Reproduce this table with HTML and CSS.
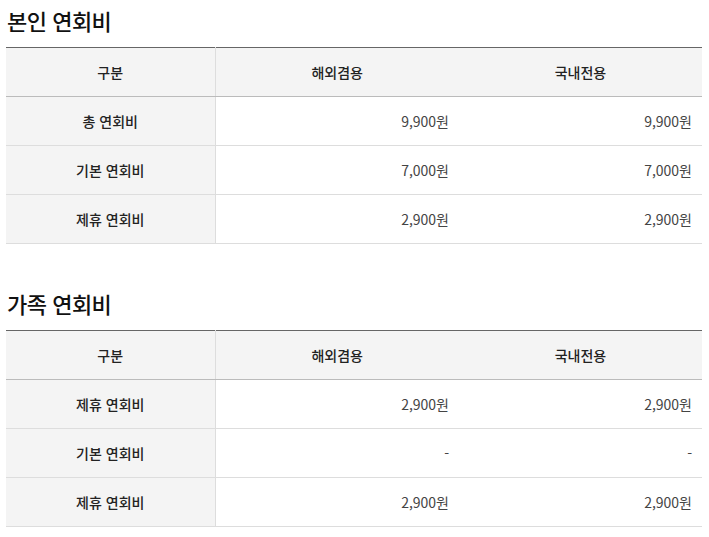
FILE: index.html
```html
<!DOCTYPE html>
<html lang="ko">
<head>
<meta charset="utf-8">
<link rel="stylesheet" href="styles.css">
</head>
<body>
<section class="fee">
  <h2 class="fee-title">본인 연회비</h2>
  <table class="fee-table">
    <colgroup><col class="c1"><col class="c2"><col class="c3"></colgroup>
    <thead>
      <tr><th>구분</th><th>해외겸용</th><th>국내전용</th></tr>
    </thead>
    <tbody>
      <tr><th>총 연회비</th><td>9,900원</td><td>9,900원</td></tr>
      <tr><th>기본 연회비</th><td>7,000원</td><td>7,000원</td></tr>
      <tr><th>제휴 연회비</th><td>2,900원</td><td>2,900원</td></tr>
    </tbody>
  </table>
</section>
<section class="fee fee-family">
  <h2 class="fee-title">가족 연회비</h2>
  <table class="fee-table">
    <colgroup><col class="c1"><col class="c2"><col class="c3"></colgroup>
    <thead>
      <tr><th>구분</th><th>해외겸용</th><th>국내전용</th></tr>
    </thead>
    <tbody>
      <tr><th>제휴 연회비</th><td>2,900원</td><td>2,900원</td></tr>
      <tr><th>기본 연회비</th><td>-</td><td>-</td></tr>
      <tr><th>제휴 연회비</th><td>2,900원</td><td>2,900원</td></tr>
    </tbody>
  </table>
</section>
</body>
</html>
```

FILE: styles.css
```css
html, body {
  margin: 0;
  padding: 0;
  background: #fff;
}
body {
  padding: 0 7px 0 6px;
  font-family: "Noto Sans CJK KR", "Noto Sans", sans-serif;
  color: #222;
}
.fee-title {
  margin: 5px 0 12px 1px;
  font-size: 22px;
  line-height: 30px;
  font-weight: 500;
  color: #111;
  letter-spacing: -0.5px;
}
.fee-family .fee-title {
  margin-top: 44px;
}
.fee-table {
  width: 100%;
  border-collapse: collapse;
  table-layout: fixed;
  border-top: 1px solid #666;
  font-size: 14px;
}
.c1 { width: 209px; }
.c2 { width: 244px; }
.c3 { width: 243px; }
.fee-table th,
.fee-table td {
  height: 49px;
  padding: 0 10px;
  border-bottom: 1px solid #ddd;
  box-sizing: border-box;
  vertical-align: middle;
  line-height: 20px;
}
.fee-table thead th {
  background: #f4f4f4;
  font-weight: 500;
  color: #222;
  text-align: center;
  border-bottom-color: #bbb;
}
.fee-table thead th:first-child {
  border-right: 1px solid #ddd;
}
.fee-table tbody th {
  background: #f4f4f4;
  font-weight: 500;
  color: #222;
  text-align: center;
  border-right: 1px solid #ddd;
}
.fee-table tbody td {
  text-align: right;
  color: #444;
  font-weight: 400;
}
```
